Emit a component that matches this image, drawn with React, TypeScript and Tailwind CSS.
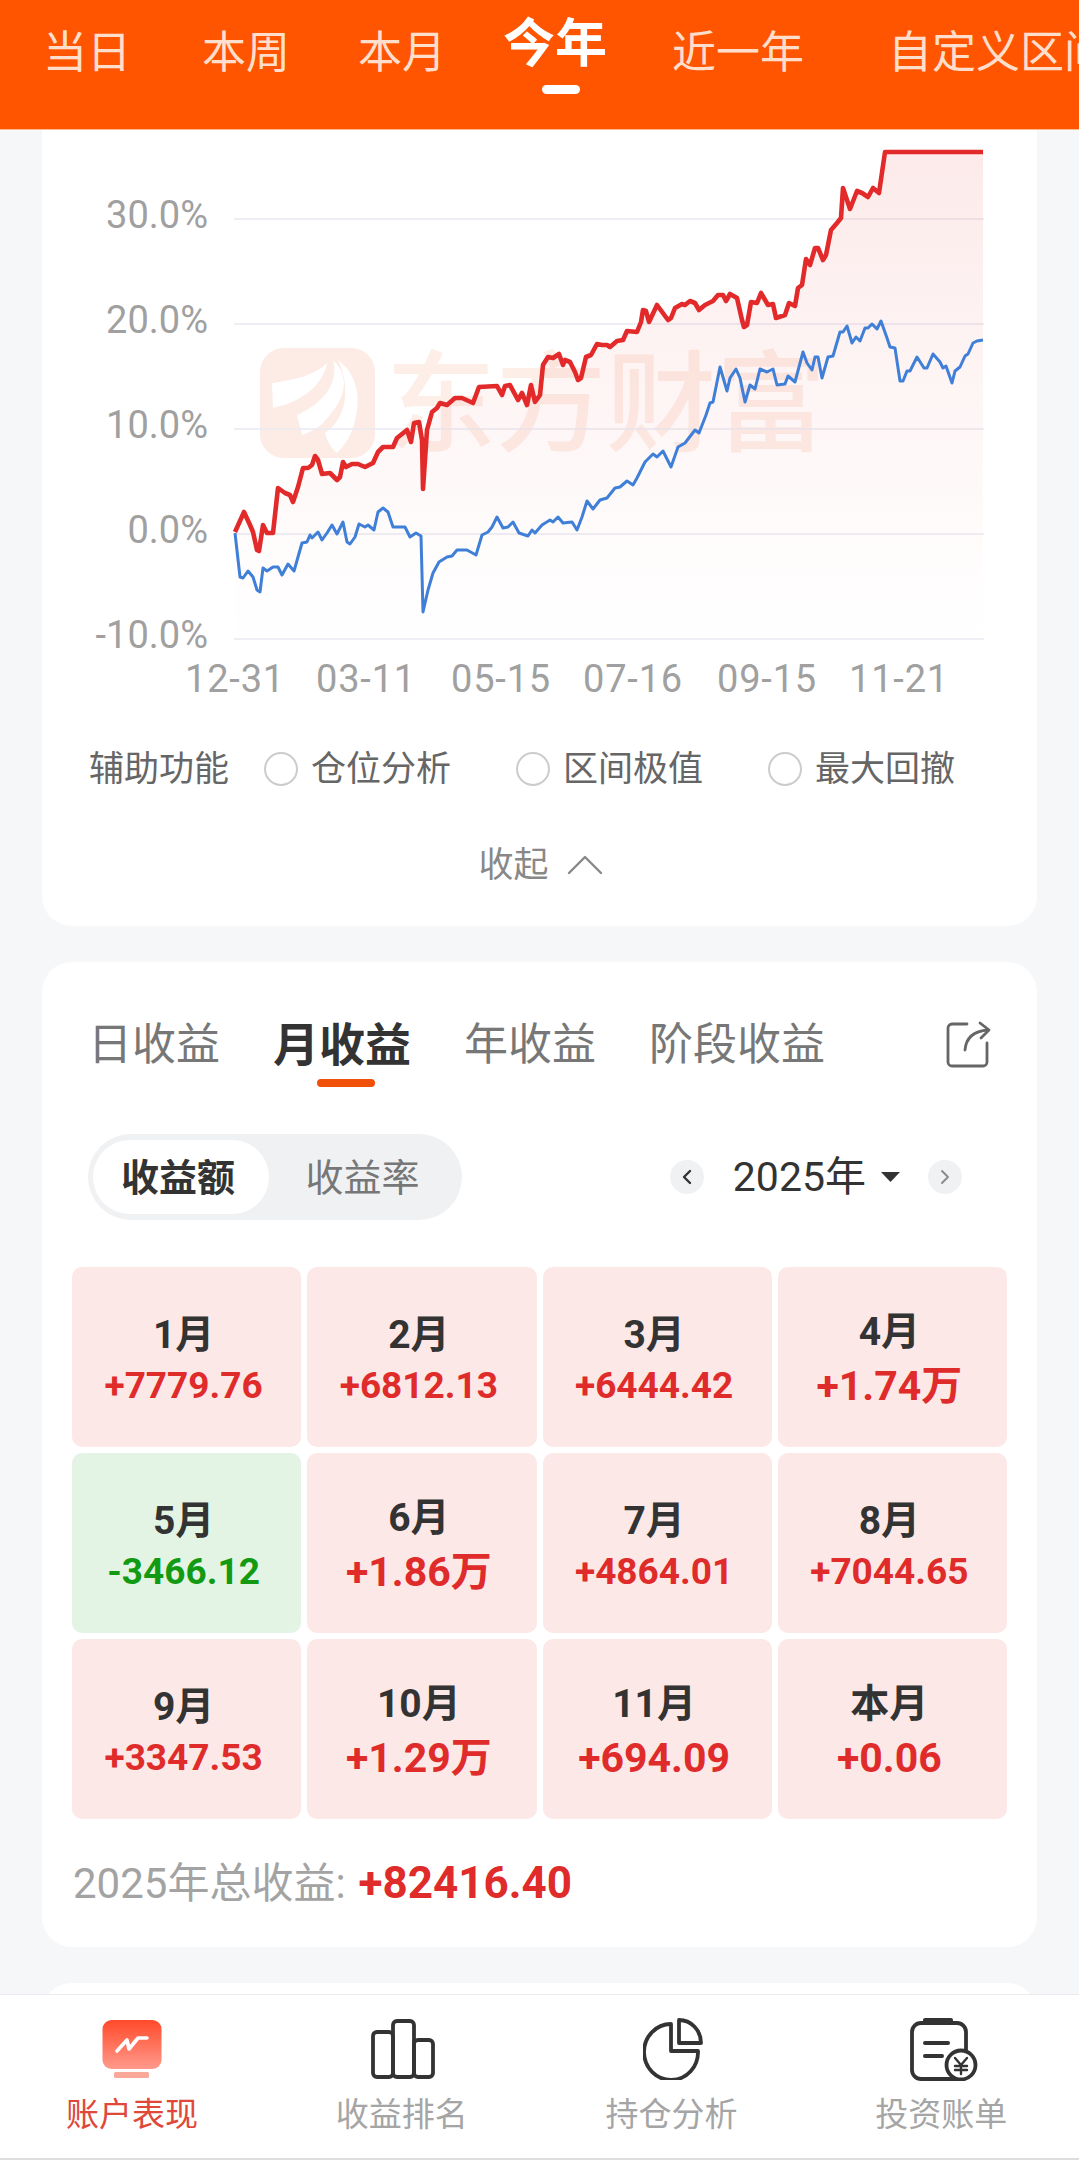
import { ChevronLeft, ChevronRight, ChevronUp } from "lucide-react";

const RED_LINE =
  "235,532 244,512 250,525 253,532 257,550 259,551 263,525 267,533 273,533 278,488 285,493 290,495 293,502 298,487 303,468 308,468 312,465 315,456 318,460 322,474 330,473 337,480 340,477 343,462 346,467 352,464 358,464 365,467 373,463 378,452 383,447 393,447 397,438 407,430 411,442 414,423 419,422 422,440 423,489 427,430 432,412 437,408 440,403 447,405 455,398 462,398 473,403 479,387 497,386 502,395 505,386 510,385 518,400 522,393 527,405 531,385 535,402 540,395 543,365 548,357 553,358 559,354 563,365 565,360 570,362 575,372 578,380 581,378 586,357 591,355 597,344 602,345 607,345 610,347 617,341 623,340 627,331 637,332 641,322 643,310 646,311 649,322 657,305 668,320 671,318 675,308 682,304 685,305 690,301 695,303 699,310 705,305 713,301 718,295 723,295 726,301 730,294 737,298 742,320 744,327 747,325 751,302 757,303 761,293 768,305 773,304 776,318 785,315 789,303 795,306 798,288 802,285 806,259 810,265 815,248 818,248 823,260 826,255 831,230 837,223 841,218 843,188 850,209 857,191 862,193 868,197 873,188 879,193 885,152 983,152";

const BLUE_LINE =
  "235,533 240,577 243,578 248,571 253,577 257,590 260,592 263,568 267,571 273,567 278,567 282,575 288,564 294,571 302,543 307,542 310,535 312,538 318,532 322,540 327,533 332,525 337,534 343,522 347,542 350,544 355,537 359,524 365,527 368,525 374,530 378,512 383,508 388,512 393,527 405,527 410,537 416,533 421,536 423,612 428,590 433,573 439,562 447,557 452,556 457,550 467,550 476,555 482,535 488,532 492,527 497,517 503,528 508,527 513,522 519,533 528,536 532,530 535,533 542,525 550,520 553,522 558,517 563,523 572,522 577,530 582,517 587,501 593,509 600,500 607,498 615,488 620,487 627,481 633,485 637,478 645,462 653,454 657,457 663,451 671,467 678,447 685,443 695,430 699,433 706,415 710,403 713,402 720,367 727,391 730,378 736,369 740,378 745,402 750,385 755,389 760,369 767,372 773,369 777,385 785,384 788,376 795,382 803,352 807,363 812,370 815,357 818,357 822,378 828,357 833,356 840,332 843,332 847,326 852,343 856,337 860,341 865,328 868,328 872,324 877,329 881,321 887,338 890,347 895,348 900,381 903,381 907,371 910,371 917,357 924,368 927,368 933,354 940,362 943,368 946,366 952,383 955,371 960,367 965,356 968,354 973,343 977,341 983,340";

const Y_TICKS = [
  { y: 219, label: "30.0%" },
  { y: 324, label: "20.0%" },
  { y: 429, label: "10.0%" },
  { y: 534, label: "0.0%" },
  { y: 639, label: "-10.0%" },
];

const X_TICKS = [
  { x: 235, label: "12-31" },
  { x: 366, label: "03-11" },
  { x: 501, label: "05-15" },
  { x: 633, label: "07-16" },
  { x: 767, label: "09-15" },
  { x: 899, label: "11-21" },
];

const MONTHS = [
  { name: "1月", value: "+7779.76" },
  { name: "2月", value: "+6812.13" },
  { name: "3月", value: "+6444.42" },
  { name: "4月", value: "+1.74万", large: true },
  { name: "5月", value: "-3466.12", loss: true },
  { name: "6月", value: "+1.86万", large: true },
  { name: "7月", value: "+4864.01" },
  { name: "8月", value: "+7044.65" },
  { name: "9月", value: "+3347.53" },
  { name: "10月", value: "+1.29万", large: true },
  { name: "11月", value: "+694.09", large: true },
  { name: "本月", value: "+0.06", large: true },
];

function TopTabs() {
  return (
    <div className="flex h-[130px] shrink-0 items-start overflow-hidden border-b border-[#ffb98f] bg-[#ff5500] pl-[43px] text-[44px] leading-[60px] whitespace-nowrap text-[#ffdfcc]">
      <span className="mt-[23px]">当日</span>
      <span className="mt-[23px] ml-[71px]">本周</span>
      <span className="mt-[23px] ml-[68px]">本月</span>
      <div className="relative ml-[57px] flex flex-col items-center">
        <span className="mt-[15px] text-[52px] font-bold text-white">今年</span>
        <span className="mt-[10px] ml-[12px] h-[9px] w-[38px] rounded-full bg-white" />
      </div>
      <span className="mt-[23px] ml-[65px]">近一年</span>
      <span className="mt-[23px] ml-[84px]">自定义区间</span>
    </div>
  );
}

// Return curves, watermark and axes share page-space coordinates through the viewBox
function ReturnChart() {
  return (
    <svg className="block h-[584px] w-[995px]" viewBox="42 130 995 584">
      <defs>
        <linearGradient id="redArea" x1="0" y1="0" x2="0" y2="1">
          <stop offset="0" stopColor="#e62e2e" stopOpacity="0.1" />
          <stop offset="0.75" stopColor="#e62e2e" stopOpacity="0.02" />
          <stop offset="1" stopColor="#e62e2e" stopOpacity="0" />
        </linearGradient>
      </defs>

      <rect x="260" y="348" width="115" height="110" rx="24" fill="#fdebe5" />
      <path d="M272 383 C295 380 315 375 327 363 C325 378 310 400 273 408 Z" fill="#fff" />
      <path d="M333 360 C348 375 350 395 323 423 C315 430 308 433 302 435 L297 415 C320 405 340 385 333 360 Z" fill="#fff" />
      <path d="M338 360 C355 372 362 395 355 420 C352 435 345 445 337 453 C330 447 327 440 325 433 C345 420 352 390 338 360 Z" fill="#fff" />
      <text x="386" y="443" fontSize="110" fontWeight="500" fill="#fdeee7">
        东方财富
      </text>

      {Y_TICKS.map((t) => (
        <g key={t.label}>
          <line x1="234" x2="984" y1={t.y} y2={t.y} stroke="#e9eaf0" strokeWidth="1.5" />
          <text x="208" y={t.y + 9} textAnchor="end" fontSize="38" fill="#a0a0a0">
            {t.label}
          </text>
        </g>
      ))}
      {X_TICKS.map((t) => (
        <text key={t.label} x={t.x} y="692" textAnchor="middle" fontSize="38" letterSpacing="0.8" fill="#a0a0a0">
          {t.label}
        </text>
      ))}

      <polygon points={`${RED_LINE} 983,650 235,650`} fill="url(#redArea)" />
      <polyline points={BLUE_LINE} fill="none" stroke="#3f7fd8" strokeWidth="3" strokeLinejoin="round" />
      <polyline points={RED_LINE} fill="none" stroke="#e32a2a" strokeWidth="4.6" strokeLinejoin="round" />
    </svg>
  );
}

function RadioOption({ label }: { label: string }) {
  return (
    <div className="flex items-center gap-[13px]">
      <span className="h-[34px] w-[34px] rounded-full border-2 border-[#cccccc]" />
      <span className="pt-[3px]">{label}</span>
    </div>
  );
}

function ChartCard() {
  return (
    <section className="rounded-b-[30px] bg-white pb-[41px]">
      <ReturnChart />
      <div className="mt-[35px] flex h-[40px] items-center pl-[47px] text-[35px] text-[#666666]">
        <span className="mr-[35px] pt-[3px]">辅助功能</span>
        <div className="flex gap-[65px]">
          <RadioOption label="仓位分析" />
          <RadioOption label="区间极值" />
          <RadioOption label="最大回撤" />
        </div>
      </div>
      <div className="mt-[56px] flex h-[40px] items-center justify-center gap-[4px] pl-[16px] text-[35px] text-[#888888]">
        <span className="pt-[3px]">收起</span>
        <ChevronUp size={64} strokeWidth={0.9} className="text-[#888888]" />
      </div>
    </section>
  );
}

function ShareIcon() {
  return (
    <svg width="46" height="48" viewBox="0 0 46 48" fill="none" stroke="#666666" strokeWidth="2.8" strokeLinecap="round" strokeLinejoin="round">
      <path d="M22 3 H7 a4 4 0 0 0 -4 4 V41 a4 4 0 0 0 4 4 H38 a4 4 0 0 0 4 -4 V22" />
      <path d="M20 29 C21 17 29 10 43 9" />
      <path d="M35 2 L44 9 L36 17" />
    </svg>
  );
}

function MonthCell({ name, value, large, loss }: { name: string; value: string; large?: boolean; loss?: boolean }) {
  return (
    <div className={`flex flex-col items-center justify-center rounded-[10px] pt-[8px] pr-[6px] ${loss ? "bg-[#e3f4e5]" : "bg-[#fde8e8]"}`}>
      <span className="text-[39px] leading-[46px] font-bold text-[#333333]">{name}</span>
      <span
        className={`mt-[3px] font-bold ${large ? "text-[41px] leading-[56px]" : "text-[37px] leading-[50px]"} ${loss ? "text-[#129a12]" : "text-[#e02b2b]"}`}
      >
        {value}
      </span>
    </div>
  );
}

function MonthlyCard() {
  return (
    <section className="mt-[36px] h-[985px] rounded-[30px] bg-white pt-[53px]">
      <div className="flex h-[60px] items-center justify-between pr-[46px] pl-[46px]">
        <div className="flex items-center gap-[53px] text-[44px] text-[#777777]">
          <span>日收益</span>
          <div className="relative">
            <span className="text-[46px] font-bold text-[#333333]">月收益</span>
            <span className="absolute top-[68px] left-[44px] h-[8px] w-[58px] rounded-full bg-[#f05008]" />
          </div>
          <span>年收益</span>
          <span>阶段收益</span>
        </div>
        <ShareIcon />
      </div>

      <div className="mt-[59px] flex items-center justify-between pr-[75px] pl-[46px]">
        <div className="flex h-[86px] w-[374px] items-center rounded-full bg-[#f0f1f3] p-[6px] pl-[5px] text-[38px]">
          <span className="flex h-[74px] w-[176px] items-center justify-center rounded-full bg-white pt-[2px] pr-[6px] font-bold text-[#333333]">
            收益额
          </span>
          <span className="flex-1 pt-[2px] text-center text-[#777777]">收益率</span>
        </div>
        <div className="flex items-center text-[41px] text-[#333333]">
          <span className="flex h-[34px] w-[34px] items-center justify-center rounded-full bg-[#f0f1f3]">
            <ChevronLeft size={24} strokeWidth={2.4} className="text-[#333333]" />
          </span>
          <span className="ml-[29px] pt-[2px]">2025年</span>
          <svg className="ml-[15px]" width="19" height="10" viewBox="0 0 19 10">
            <path d="M0 0 H19 L9.5 10 Z" fill="#333333" />
          </svg>
          <span className="ml-[28px] flex h-[34px] w-[34px] items-center justify-center rounded-full bg-[#f0f1f3]">
            <ChevronRight size={24} strokeWidth={1.8} className="text-[#888888]" />
          </span>
        </div>
      </div>

      <div className="mt-[47px] ml-[30px] grid w-[935px] grid-cols-4 auto-rows-[180px] gap-x-[6px] gap-y-[6px]">
        {MONTHS.map((m) => (
          <MonthCell key={m.name} {...m} />
        ))}
      </div>

      <div className="mt-[41px] ml-[31px] flex h-[46px] items-center gap-[13px]">
        <span className="text-[42px] text-[#a3a3a3]">2025年总收益:</span>
        <span className="text-[44px] font-bold text-[#e02b2b]">+82416.40</span>
      </div>
    </section>
  );
}

function AccountIcon() {
  return (
    <svg width="60" height="60" viewBox="0 0 60 60">
      <defs>
        <linearGradient id="accountFill" x1="0" y1="0" x2="0" y2="1">
          <stop offset="0" stopColor="#ff4a2a" />
          <stop offset="1" stopColor="#ff9a8c" />
        </linearGradient>
      </defs>
      <rect x="0.5" y="1" width="59" height="49" rx="9" fill="url(#accountFill)" />
      <rect x="12" y="53" width="35" height="6" rx="1.5" fill="#f9a89a" />
      <polyline points="15,32 25,21 27,30 36,19 45,19" fill="none" stroke="#ffffff" strokeWidth="3.6" strokeLinecap="round" strokeLinejoin="round" />
    </svg>
  );
}

function RankIcon() {
  return (
    <svg className="ml-[3px]" width="64" height="60" viewBox="0 0 64 60" fill="none" stroke="#333333" strokeWidth="3.8">
      <rect x="2" y="13" width="20" height="45" rx="4" />
      <rect x="22" y="2" width="21" height="56" rx="4" />
      <rect x="43" y="21" width="19" height="37" rx="4" />
    </svg>
  );
}

function PieIcon() {
  return (
    <svg className="ml-[4px]" width="60" height="62" viewBox="0 0 60 62" fill="none" stroke="#333333" strokeWidth="3.8" strokeLinejoin="round">
      <path d="M28 6 A27 28 0 1 0 55 33 H28 Z" />
      <path d="M36 2 A22 23 0 0 1 58 25 H36 Z" />
    </svg>
  );
}

function BillIcon() {
  return (
    <svg className="ml-[5px]" width="68" height="64" viewBox="0 0 68 64" fill="none" stroke="#333333" strokeWidth="3.8" strokeLinecap="round">
      <rect x="2" y="6" width="54" height="56" rx="9" />
      <rect x="13" y="1" width="30" height="5" rx="2" fill="#333333" stroke="none" />
      <path d="M15 26 H38" strokeWidth="4" />
      <path d="M15 39 H32" strokeWidth="4" />
      <circle cx="51" cy="48" r="14.5" fill="#ffffff" />
      <path d="M45 41 L51 48 L57 41 M51 48 V57 M45 49 H57 M45 53 H57" strokeWidth="2.4" />
    </svg>
  );
}

function BottomNav() {
  const items = [
    { label: "账户表现", icon: <AccountIcon />, active: true },
    { label: "收益排名", icon: <RankIcon /> },
    { label: "持仓分析", icon: <PieIcon /> },
    { label: "投资账单", icon: <BillIcon /> },
  ];
  return (
    <nav className="z-10 h-[166px] shrink-0 border-t border-b-2 border-[#eaebee] border-b-[#dddddd] bg-white">
      <div className="-ml-[3px] grid w-[1079px] grid-cols-4">
        {items.map((item) => (
          <div key={item.label} className="flex flex-col items-center">
            <div className="mt-[22px] flex h-[64px] items-center justify-center">{item.icon}</div>
            <span className={`mt-[12px] text-[33px] leading-[44px] ${item.active ? "text-[#e0483a]" : "text-[#a5a5a5]"}`}>
              {item.label}
            </span>
          </div>
        ))}
      </div>
    </nav>
  );
}

export default function App() {
  return (
    <div className="flex h-[2160px] w-[1079px] flex-col overflow-hidden bg-[#f6f7f9] [font-family:Roboto,'Noto_Sans_CJK_SC',sans-serif]">
      <TopTabs />
      <main className="min-h-0 flex-1 overflow-hidden px-[42px]">
        <ChartCard />
        <MonthlyCard />
        <div className="mt-[36px] h-[40px] rounded-t-[30px] bg-white" />
      </main>
      <BottomNav />
    </div>
  );
}
